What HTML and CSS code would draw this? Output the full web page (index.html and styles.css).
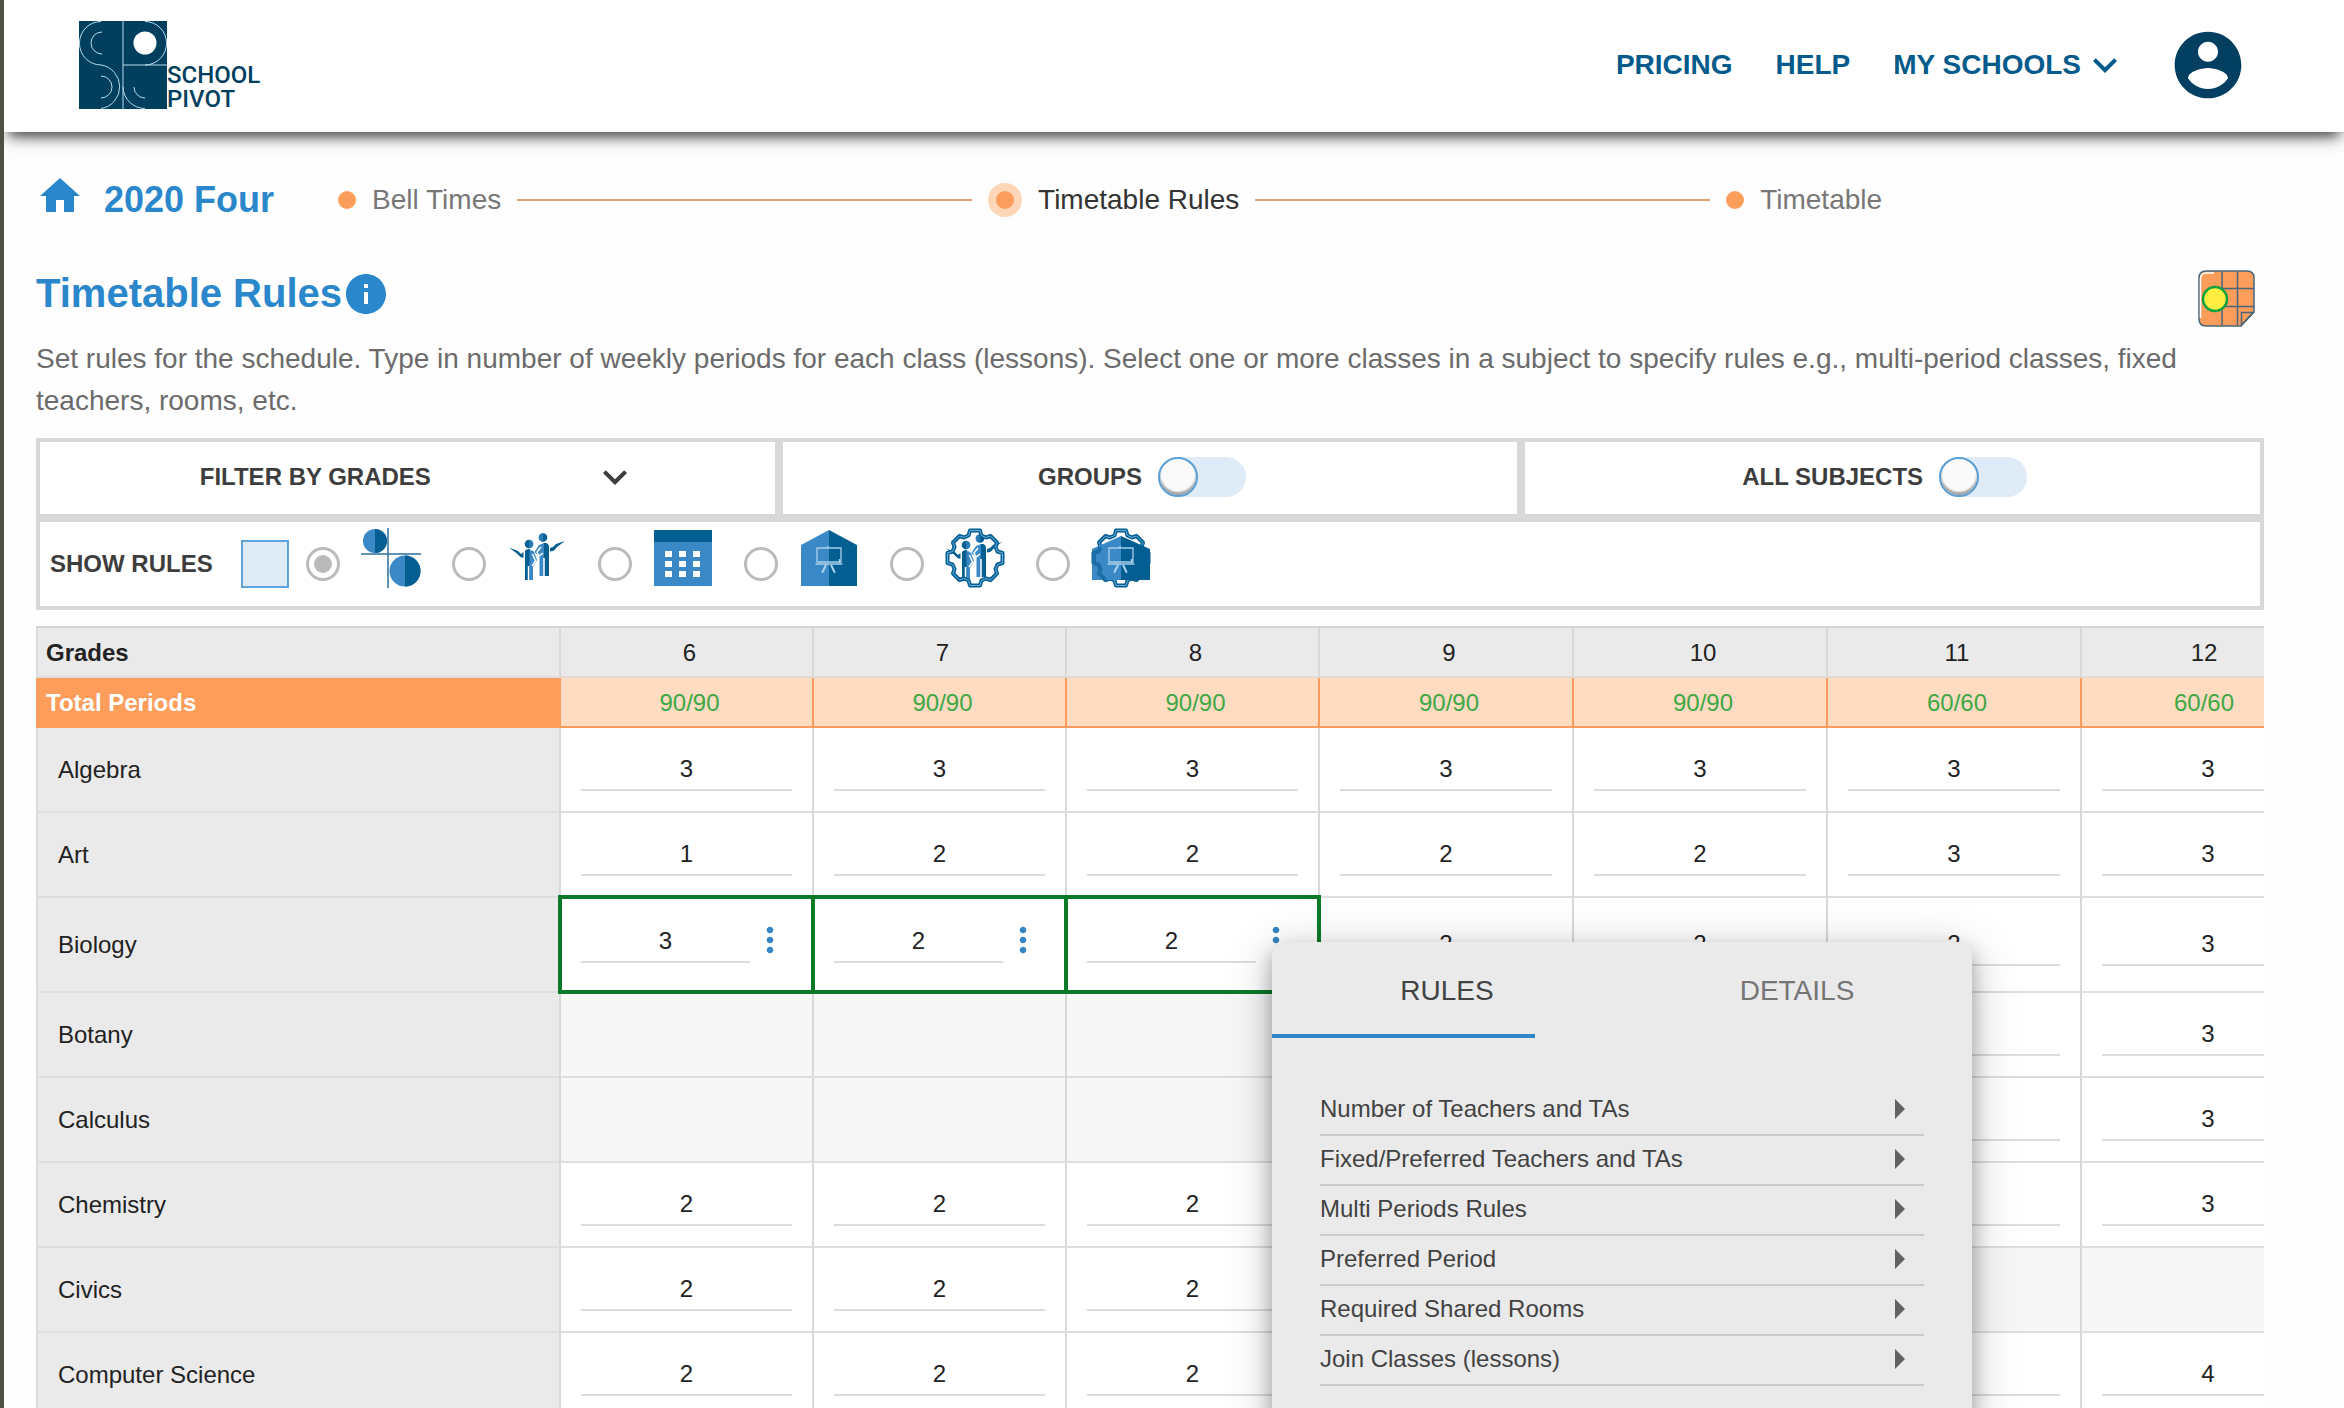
FILE: index.html
```html
<!DOCTYPE html>
<html lang="en">
<head>
<meta charset="utf-8">
<title>School Pivot - Timetable Rules</title>
<link rel="stylesheet" href="styles.css">
</head>
<body>
<svg class="defs" aria-hidden="true">
  <defs>
    <g id="people">
      <g fill="#035e92">
        <circle cx="22" cy="16" r="4.300"/><circle cx="36" cy="9.500" r="4.300"/>
        <path d="M2 19.500l9 3.500 3 3 2.500-2v6q-4-1-6-4z"/>
        <path d="M18 23q1-2 4-2h1v31h-5z"/>
        <path d="M37 15h2q2 0 3 3v30h-5z"/>
        <path d="M43 20l3-1 3-3 9-3-8 6q-2 3-4 4l-3 .5z"/>
      </g>
      <g fill="#3a88c6">
        <path d="M22 11.700a4.300 4.300 0 0 1 0 8.600zM36 5.200a4.300 4.300 0 0 0 0 8.600z" opacity=".7"/>
        <path d="M22.500 22q4 0 5 3l2.500 7-4 7v13h-3.500zM32 17l5-2v33h-4.500V29l-5-5z"/>
      </g>
      <path d="M25.500 26l3 7-3.500 5M34 19l-4 5 2 4 4-3M21.500 38v14M37 30v18" fill="none" stroke="#fff" stroke-width="1.500"/>
    </g>
    <g id="easel" fill="none" stroke="#a9d0ec" stroke-width="1.300">
      <path d="M17 20h24v14H17zM15.500 36h27M28 18v2M26 37l-4 8M31 37l4 8M39.500 31v4"/>
      <path d="M26 37l-3.500 7M31 37l3.500 7" stroke-width="2"/>
    </g>
    <path id="gear" d="M23.500 7.500L25 2.500h10L36.500 7.500 41 9.500 45.500 8 52 14.500 50.500 19 52.500 23.500 57.500 25v10L52.500 36.500 50.500 41 52 45.500 45.500 52 41 50.500 36.500 52.500 35 57.500H25L23.500 52.500 19 50.500 14.500 52 8 45.500 9.500 41 7.500 36.500 2.500 35V25L7.500 23.500 9.500 19 8 14.500 14.500 8 19 9.500z" fill="none" stroke-linejoin="round"/>
    <path id="chevron" d="M7.410 8.590 12 13.170l4.590-4.580L18 10l-6 6-6-6z"/>
    <path id="more" d="M12 8c1.100 0 2-.9 2-2s-.9-2-2-2-2 .9-2 2 .9 2 2 2zm0 2c-1.100 0-2 .9-2 2s.9 2 2 2 2-.9 2-2-.9-2-2-2zm0 6c-1.100 0-2 .9-2 2s.9 2 2 2 2-.9 2-2-.9-2-2-2z"/>
  </defs>
</svg>

<div class="app">
  <header class="header">
    <a class="logo" href="#">
      <svg viewBox="0 0 88 88" aria-hidden="true">
        <path fill="#003f5e" d="M0 0h88v88H0z"/>
        <g fill="none" stroke="#b9dcec" stroke-width="1">
          <path d="M44 0v88M44 44h44M22 .5A21.500 21.700 0 0 0 22 44a22 22 0 0 1 0 43.500M66 .5a21.500 21.700 0 0 1 0 43.500M44 66a22 22 0 0 0 22 21.500M23 11a11 11 0 0 0 0 22M22 55a11 11 0 0 1 0 22M55 66a11 11 0 0 0 11 11"/>
        </g>
        <circle cx="66" cy="22" r="11.500" fill="#fff"/>
      </svg>
      <span class="logo-text">SCHOOL<br>PIVOT</span>
    </a>
    <nav class="nav">
      <a href="#">PRICING</a>
      <a href="#">HELP</a>
      <button class="nav-schools" type="button">MY SCHOOLS<svg class="icon" viewBox="0 0 24 24" aria-hidden="true"><use href="#chevron"/></svg></button>
      <button class="nav-account" type="button" aria-label="Account"><svg viewBox="0 0 24 24" aria-hidden="true"><path d="M12 2C6.480 2 2 6.480 2 12s4.480 10 10 10 10-4.480 10-10S17.520 2 12 2zm0 3c1.660 0 3 1.340 3 3s-1.340 3-3 3-3-1.340-3-3 1.340-3 3-3zm0 14.200c-2.500 0-4.710-1.280-6-3.220.03-1.990 4-3.080 6-3.080 1.990 0 5.970 1.090 6 3.080-1.290 1.940-3.500 3.220-6 3.220z"/></svg></button>
    </nav>
  </header>

  <main class="main">
    <div class="crumbs">
      <a class="home" href="#"><svg class="icon" viewBox="0 0 24 24" aria-hidden="true"><path d="M10 20v-6h4v6h5v-8h3L12 3 2 12h3v8z"/></svg><span>2020 Four</span></a>
      <ol class="steps">
        <li class="step"><a href="#">Bell Times</a></li>
        <li class="step step-active"><a href="#">Timetable Rules</a></li>
        <li class="step"><a href="#">Timetable</a></li>
      </ol>
    </div>

    <div class="title-row">
      <h1>Timetable Rules</h1>
      <button class="info" type="button" aria-label="Information"><svg class="icon" viewBox="0 0 24 24" aria-hidden="true"><path d="M12 2C6.480 2 2 6.480 2 12s4.480 10 10 10 10-4.480 10-10S17.520 2 12 2zm1 15h-2v-6h2v6zm0-8h-2V7h2v2z"/></svg></button>
      <button class="sheet" type="button" aria-label="Open timetable"><svg viewBox="0 0 58 58" aria-hidden="true">
        <path d="M8 1h41q7 0 7 7v34L43 56H8q-7 0-7-7V8q0-7 7-7z" fill="#fd9d5c" stroke="#4a6478" stroke-width="1.500"/>
        <path d="M2.500 48V9q0-6 6-6H16" fill="none" stroke="#fff" stroke-width="1.500"/>
        <path d="M24 1v54M39.500 1v54M24 18.500h32M24 36.500h32M43.500 55V42.500H55z" fill="none" stroke="#4a6478" stroke-width="1.500"/>
        <circle cx="17" cy="29" r="12" fill="#ffee3f" stroke="#0da33c" stroke-width="2.500"/>
      </svg></button>
    </div>
    <p class="intro">Set rules for the schedule. Type in number of weekly periods for each class (lessons). Select one or more classes in a subject to specify rules e.g., multi-period classes, fixed teachers, rooms, etc.</p>

    <div class="filters">
      <button class="filter filter-grades" type="button">FILTER BY GRADES<svg class="icon" viewBox="0 0 24 24" aria-hidden="true"><use href="#chevron"/></svg></button>
      <label class="filter filter-toggle">GROUPS<input class="toggle" type="checkbox" role="switch"></label>
      <label class="filter filter-toggle">ALL SUBJECTS<input class="toggle" type="checkbox" role="switch"></label>
    </div>

    <div class="rules" role="group" aria-label="Rules to show">
      <label class="rules-all"><span>SHOW RULES</span><input class="swatch" type="checkbox"></label>
      <label class="rule"><input class="radio" type="radio" name="rule" aria-label="Split classes" checked>
        <svg viewBox="0 0 60 60" aria-hidden="true"><circle cx="14" cy="13" r="12" fill="#3a88c6"/><path d="M14 1a12 12 0 0 1 0 24z" fill="#035e92"/><circle cx="44" cy="43" r="15.500" fill="#3a88c6"/><path d="M44 27.500a15.500 15.500 0 0 1 0 31z" fill="#035e92"/><path d="M0 26h60M27 0v60" stroke="#2d6f9f" stroke-width="1.500"/></svg></label>
      <label class="rule"><input class="radio" type="radio" name="rule" aria-label="Teachers">
        <svg viewBox="0 0 60 60" aria-hidden="true"><use href="#people"/></svg></label>
      <label class="rule"><input class="radio" type="radio" name="rule" aria-label="Periods">
        <svg viewBox="0 0 60 60" aria-hidden="true"><path fill="#3a88c6" d="M1 2h58v56H1z"/><path fill="#035e92" d="M1 2h58v12H1z"/><path fill="#fff" d="M12 23h7v6h-7zM26 23h7v6h-7zM40 23h7v6h-7zM12 33h7v6h-7zM26 33h7v6h-7zM40 33h7v6h-7zM12 43h7v6h-7zM26 43h7v6h-7zM40 43h7v6h-7z"/></svg></label>
      <label class="rule"><input class="radio" type="radio" name="rule" aria-label="Rooms">
        <svg viewBox="0 0 60 60" aria-hidden="true"><path fill="#3a88c6" d="M30 2 2 17v41h28z"/><path fill="#035e92" d="M30 2l28 15v41H30z"/><use href="#easel" x="1"/></svg></label>
      <label class="rule"><input class="radio" type="radio" name="rule" aria-label="Preferred teachers">
        <svg viewBox="0 0 60 60" aria-hidden="true"><use href="#people" x="-1" y="1"/><use href="#gear" stroke="#035e92" stroke-width="4"/><use href="#gear" stroke="#6fb0da" stroke-width="1"/></svg></label>
      <label class="rule"><input class="radio" type="radio" name="rule" aria-label="Preferred rooms">
        <svg viewBox="0 0 60 60" aria-hidden="true"><use href="#gear" stroke="#035e92" stroke-width="4"/><use href="#gear" stroke="#6fb0da" stroke-width="1"/><path fill="#3a88c6" d="M30 8 1 21v31h29z"/><path fill="#035e92" d="M30 8l29 13v31H30z"/><path d="M9.500 19l-2 4.500L3 25v10l4.500 1.500 2 4.500L8 45.500l6.500 6" fill="none" stroke="#1c6ea6" stroke-width="4"/><use href="#easel" x="1"/></svg></label>
    </div>

    <div class="grid-wrap">
      <table class="grid">
        <colgroup><col class="col-label"><col class="col-lower" span="3"><col span="4"></colgroup>
        <thead>
          <tr class="row-grades"><th>Grades</th><th>6</th><th>7</th><th>8</th><th>9</th><th>10</th><th>11</th><th>12</th></tr>
          <tr class="row-total"><th>Total Periods</th><td>90/90</td><td>90/90</td><td>90/90</td><td>90/90</td><td>90/90</td><td>60/60</td><td>60/60</td></tr>
        </thead>
        <tbody>
          <tr><th>Algebra</th>
            <td><input aria-label="Algebra, grade 6" value="3"></td><td><input aria-label="Algebra, grade 7" value="3"></td><td><input aria-label="Algebra, grade 8" value="3"></td><td><input aria-label="Algebra, grade 9" value="3"></td><td><input aria-label="Algebra, grade 10" value="3"></td><td><input aria-label="Algebra, grade 11" value="3"></td><td><input aria-label="Algebra, grade 12" value="3"></td></tr>
          <tr><th>Art</th>
            <td><input aria-label="Art, grade 6" value="1"></td><td><input aria-label="Art, grade 7" value="2"></td><td><input aria-label="Art, grade 8" value="2"></td><td><input aria-label="Art, grade 9" value="2"></td><td><input aria-label="Art, grade 10" value="2"></td><td><input aria-label="Art, grade 11" value="3"></td><td><input aria-label="Art, grade 12" value="3"></td></tr>
          <tr class="row-tall"><th>Biology</th>
            <td class="selected"><div class="cell"><input aria-label="Biology, grade 6" value="3"><button class="more" type="button" aria-label="Biology, grade 6 rules"><svg viewBox="0 0 24 24" aria-hidden="true"><use href="#more"/></svg></button></div></td>
            <td class="selected"><div class="cell"><input aria-label="Biology, grade 7" value="2"><button class="more" type="button" aria-label="Biology, grade 7 rules"><svg viewBox="0 0 24 24" aria-hidden="true"><use href="#more"/></svg></button></div></td>
            <td class="selected"><div class="cell"><input aria-label="Biology, grade 8" value="2"><button class="more" type="button" aria-label="Biology, grade 8 rules"><svg viewBox="0 0 24 24" aria-hidden="true"><use href="#more"/></svg></button></div>
              <div class="menu">
                <div class="tabs" role="tablist">
                  <button class="tab tab-active" type="button" role="tab" aria-selected="true">RULES</button>
                  <button class="tab" type="button" role="tab" aria-selected="false">DETAILS</button>
                </div>
                <ul class="menu-list">
                  <li><button type="button">Number of Teachers and TAs</button></li>
                  <li><button type="button">Fixed/Preferred Teachers and TAs</button></li>
                  <li><button type="button">Multi Periods Rules</button></li>
                  <li><button type="button">Preferred Period</button></li>
                  <li><button type="button">Required Shared Rooms</button></li>
                  <li><button type="button">Join Classes (lessons)</button></li>
                </ul>
              </div></td>
            <td><input aria-label="Biology, grade 9" value="2"></td><td><input aria-label="Biology, grade 10" value="2"></td><td><input aria-label="Biology, grade 11" value="2"></td><td><input aria-label="Biology, grade 12" value="3"></td></tr>
          <tr><th>Botany</th>
            <td class="none"></td><td class="none"></td><td class="none"></td><td class="none"></td><td class="none"></td><td><input aria-label="Botany, grade 11" value=""></td><td><input aria-label="Botany, grade 12" value="3"></td></tr>
          <tr><th>Calculus</th>
            <td class="none"></td><td class="none"></td><td class="none"></td><td class="none"></td><td class="none"></td><td><input aria-label="Calculus, grade 11" value=""></td><td><input aria-label="Calculus, grade 12" value="3"></td></tr>
          <tr><th>Chemistry</th>
            <td><input aria-label="Chemistry, grade 6" value="2"></td><td><input aria-label="Chemistry, grade 7" value="2"></td><td><input aria-label="Chemistry, grade 8" value="2"></td><td><input aria-label="Chemistry, grade 9" value=""></td><td><input aria-label="Chemistry, grade 10" value=""></td><td><input aria-label="Chemistry, grade 11" value=""></td><td><input aria-label="Chemistry, grade 12" value="3"></td></tr>
          <tr><th>Civics</th>
            <td><input aria-label="Civics, grade 6" value="2"></td><td><input aria-label="Civics, grade 7" value="2"></td><td><input aria-label="Civics, grade 8" value="2"></td><td class="none"></td><td class="none"></td><td class="none"></td><td class="none"></td></tr>
          <tr><th>Computer Science</th>
            <td><input aria-label="Computer Science, grade 6" value="2"></td><td><input aria-label="Computer Science, grade 7" value="2"></td><td><input aria-label="Computer Science, grade 8" value="2"></td><td><input aria-label="Computer Science, grade 9" value=""></td><td><input aria-label="Computer Science, grade 10" value=""></td><td><input aria-label="Computer Science, grade 11" value=""></td><td><input aria-label="Computer Science, grade 12" value="4"></td></tr>
        </tbody>
      </table>
    </div>
  </main>
</div>
</body>
</html>
```
FILE: styles.css
```css
*, *::before, *::after { box-sizing: border-box; }

body {
  margin: 0;
  font-family: "Liberation Sans", Arial, sans-serif;
  font-size: 24px;
  color: #222;
  background: #fefefe;
}

button, input { font: inherit; color: inherit; margin: 0; }
button { padding: 0; border: 0; background: none; cursor: pointer; }
a { color: inherit; text-decoration: none; }
svg { display: block; flex: none; fill: currentColor; }

.defs { position: absolute; width: 0; height: 0; }
.icon { width: 48px; height: 48px; }

.app {
  height: 100vh;
  overflow: hidden;
  border-left: 4px solid #504f44;
}

/* Header */
.header {
  display: flex;
  align-items: center;
  justify-content: space-between;
  height: 132px;
  padding: 0 96px 2px 75px;
  background: #fff;
  box-shadow: 0 10px 12px -6px rgba(0, 0, 0, .65), 0 4px 16px rgba(0, 0, 0, .2), 0 4px 32px rgba(0, 0, 0, .08);
}
.logo { display: flex; align-items: flex-end; color: #003f5e; }
.logo svg { width: 88px; height: 88px; }
.logo-text {
  margin-bottom: -2px;
  font-family: Roboto, sans-serif;
  font-size: 24px;
  font-weight: 500;
  line-height: 24px;
}
.nav {
  display: flex;
  align-items: center;
  gap: 43px;
  color: #035b8c;
  font-size: 28px;
  font-weight: bold;
}
.nav-schools { display: flex; align-items: center; }
.nav-account { margin-left: -4px; color: #023f60; }
.nav-account svg { width: 80px; height: 80px; }

/* Breadcrumb steps */
.main { padding: 40px 80px 0 32px; }
.crumbs { display: flex; align-items: center; height: 56px; gap: 64px; }
.home {
  display: flex;
  align-items: center;
  gap: 20px;
  color: #2a87cb;
  font-size: 36px;
  font-weight: bold;
}
.home svg { margin-bottom: 8px; }
.steps {
  display: flex;
  flex: 1;
  max-width: 1544px;
  margin: 0;
  padding: 0;
  list-style: none;
  font-size: 28px;
  color: #777;
}
.step { display: flex; flex: 1 1 auto; align-items: center; gap: 16px; }
.step:last-child { flex: none; }
.step::before {
  content: "";
  width: 18px;
  height: 18px;
  border-radius: 50%;
  background: #fd9d5c;
}
.step:not(:last-child)::after {
  content: "";
  flex: 1;
  height: 2px;
  margin-right: 16px;
  background: #e8a06e;
}
.step-active { color: #333; }
.step-active::before {
  width: 34px;
  height: 34px;
  border: 8px solid #fed6b8;
}

/* Title */
.title-row { display: flex; align-items: flex-start; height: 58px; margin-top: 42px; }
h1 { margin: 0; font-size: 40px; line-height: 46px; color: #2a87cb; }
.info { color: #2a87cb; }
.sheet { margin: 0 8px 0 auto; }
.sheet svg { width: 58px; height: 58px; }
.intro {
  margin: 10px 0 16px;
  font-size: 28px;
  line-height: 42px;
  color: #6b6b6b;
}

/* Filters */
.filters {
  display: grid;
  grid-template-columns: repeat(3, 1fr);
  font-weight: bold;
  color: #3d3d3d;
}
.filter {
  display: flex;
  align-items: center;
  justify-content: center;
  gap: 16px;
  height: 80px;
  padding-bottom: 2px;
  border: 4px solid #d8d8d8;
  background: #fff;
}
.filter-grades { gap: 160px; padding-left: 24px; font-weight: bold; }
.filter-toggle { padding-right: 16px; }
.toggle {
  appearance: none;
  width: 88px;
  height: 40px;
  border-radius: 20px;
  background: #dfebf7;
}
.toggle::before {
  content: "";
  display: block;
  width: 40px;
  height: 40px;
  border: 2px solid #5b9fd4;
  border-radius: 50%;
  background: #fafafa;
  box-shadow: inset 0 -3px 2px rgba(0, 0, 0, .35);
}

.rules {
  display: flex;
  align-items: center;
  height: 92px;
  margin-bottom: 16px;
  padding: 0 10px;
  border: 4px solid #d8d8d8;
  background: #fff;
}
.rules-all {
  display: flex;
  align-items: center;
  gap: 28px;
  margin-right: 17px;
  font-weight: bold;
  color: #3d3d3d;
}
.swatch {
  appearance: none;
  width: 48px;
  height: 48px;
  border: 2px solid #5ea3dc;
  background: #dfebf7;
}
.rule { display: flex; align-items: center; gap: 21px; margin-right: 31px; }
.rule svg { width: 60px; height: 60px; margin-bottom: 12px; }
.radio {
  appearance: none;
  width: 34px;
  height: 34px;
  padding: 5px;
  border: 3px solid #bbb;
  border-radius: 50%;
  background: #fff;
}
.radio:checked { background: #bbb content-box; }

/* Timetable grid */
.grid-wrap { overflow: hidden; }
.grid {
  width: calc(100% + 72px);
  table-layout: fixed;
  border-collapse: separate;
  border-spacing: 0;
  border-top: 2px solid #d5d5d5;
}
.col-label { width: 525px; }
.col-lower { width: 253px; }
.grid th, .grid td {
  height: 85px;
  padding: 0;
  border-right: 2px solid #d8d8d8;
  border-bottom: 2px solid #dedede;
  text-align: center;
  vertical-align: middle;
}
.grid th { background: #eaeaea; font-weight: normal; }
.grid th:first-child { border-left: 2px solid #dcdcdc; }
.grid td { padding: 0 20px; background: #fff; }
.grid td.none { background: #f7f7f7; }
.grid tbody th { padding-left: 20px; text-align: left; }
.grid thead th, .grid thead td { height: 50px; padding: 2px 0 0 6px; }
.grid thead th:first-child { padding-left: 8px; text-align: left; font-weight: bold; }
.grid thead th:last-child, .grid thead td:last-child { padding: 2px 8px 0 0; }
.grid .row-total th { background: #fd9d5c; border-color: #fd9d5c; color: #fff; }
.grid .row-total td { background: #fedcc1; border-color: #f99b5a; color: #3fa845; }
.grid .row-grades th:not(:first-child) { border-bottom-color: #e3d9d2; }
.grid .row-tall th, .grid .row-tall td { height: 95px; }

.grid input {
  display: block;
  width: 100%;
  min-width: 0;
  height: 42px;
  padding: 0;
  border: 0;
  border-bottom: 2px solid #dcdcdc;
  background: none;
  text-align: center;
}
.grid td.selected { position: relative; padding: 0 22px 6px 20px; }
.selected::after {
  content: "";
  position: absolute;
  inset: -3px;
  border: 4px solid #0a7a28;
  pointer-events: none;
}
.cell { display: flex; align-items: center; }
.more { margin-bottom: 4px; color: #3585c5; }
.more svg { width: 40px; height: 40px; }

/* Rules menu */
.menu {
  position: absolute;
  z-index: 2;
  top: 44px;
  left: 205px;
  width: 700px;
  padding-bottom: 60px;
  border-radius: 10px;
  background: #eaeaea;
  box-shadow: 0 10px 20px rgba(0, 0, 0, .3), 0 8px 50px rgba(0, 0, 0, .2);
  color: #424242;
}
.tabs { display: flex; font-size: 28px; }
.tab { position: relative; flex: 1; height: 96px; padding-top: 2px; color: #757575; }
.tab-active { color: #424242; }
.tab-active::after {
  content: "";
  position: absolute;
  left: 0;
  bottom: 0;
  width: 75%;
  height: 4px;
  background: #2f87c8;
}
.menu-list { margin: 0; padding: 48px 48px 0; list-style: none; }
.menu-list button {
  display: flex;
  align-items: center;
  justify-content: space-between;
  width: 100%;
  height: 50px;
  padding: 0 19px 2px 0;
  border-bottom: 2px solid #cbcbcb;
}
.menu-list button::after {
  content: "";
  border: 10px solid transparent;
  border-left-color: #616161;
  border-right: 0;
}
```
